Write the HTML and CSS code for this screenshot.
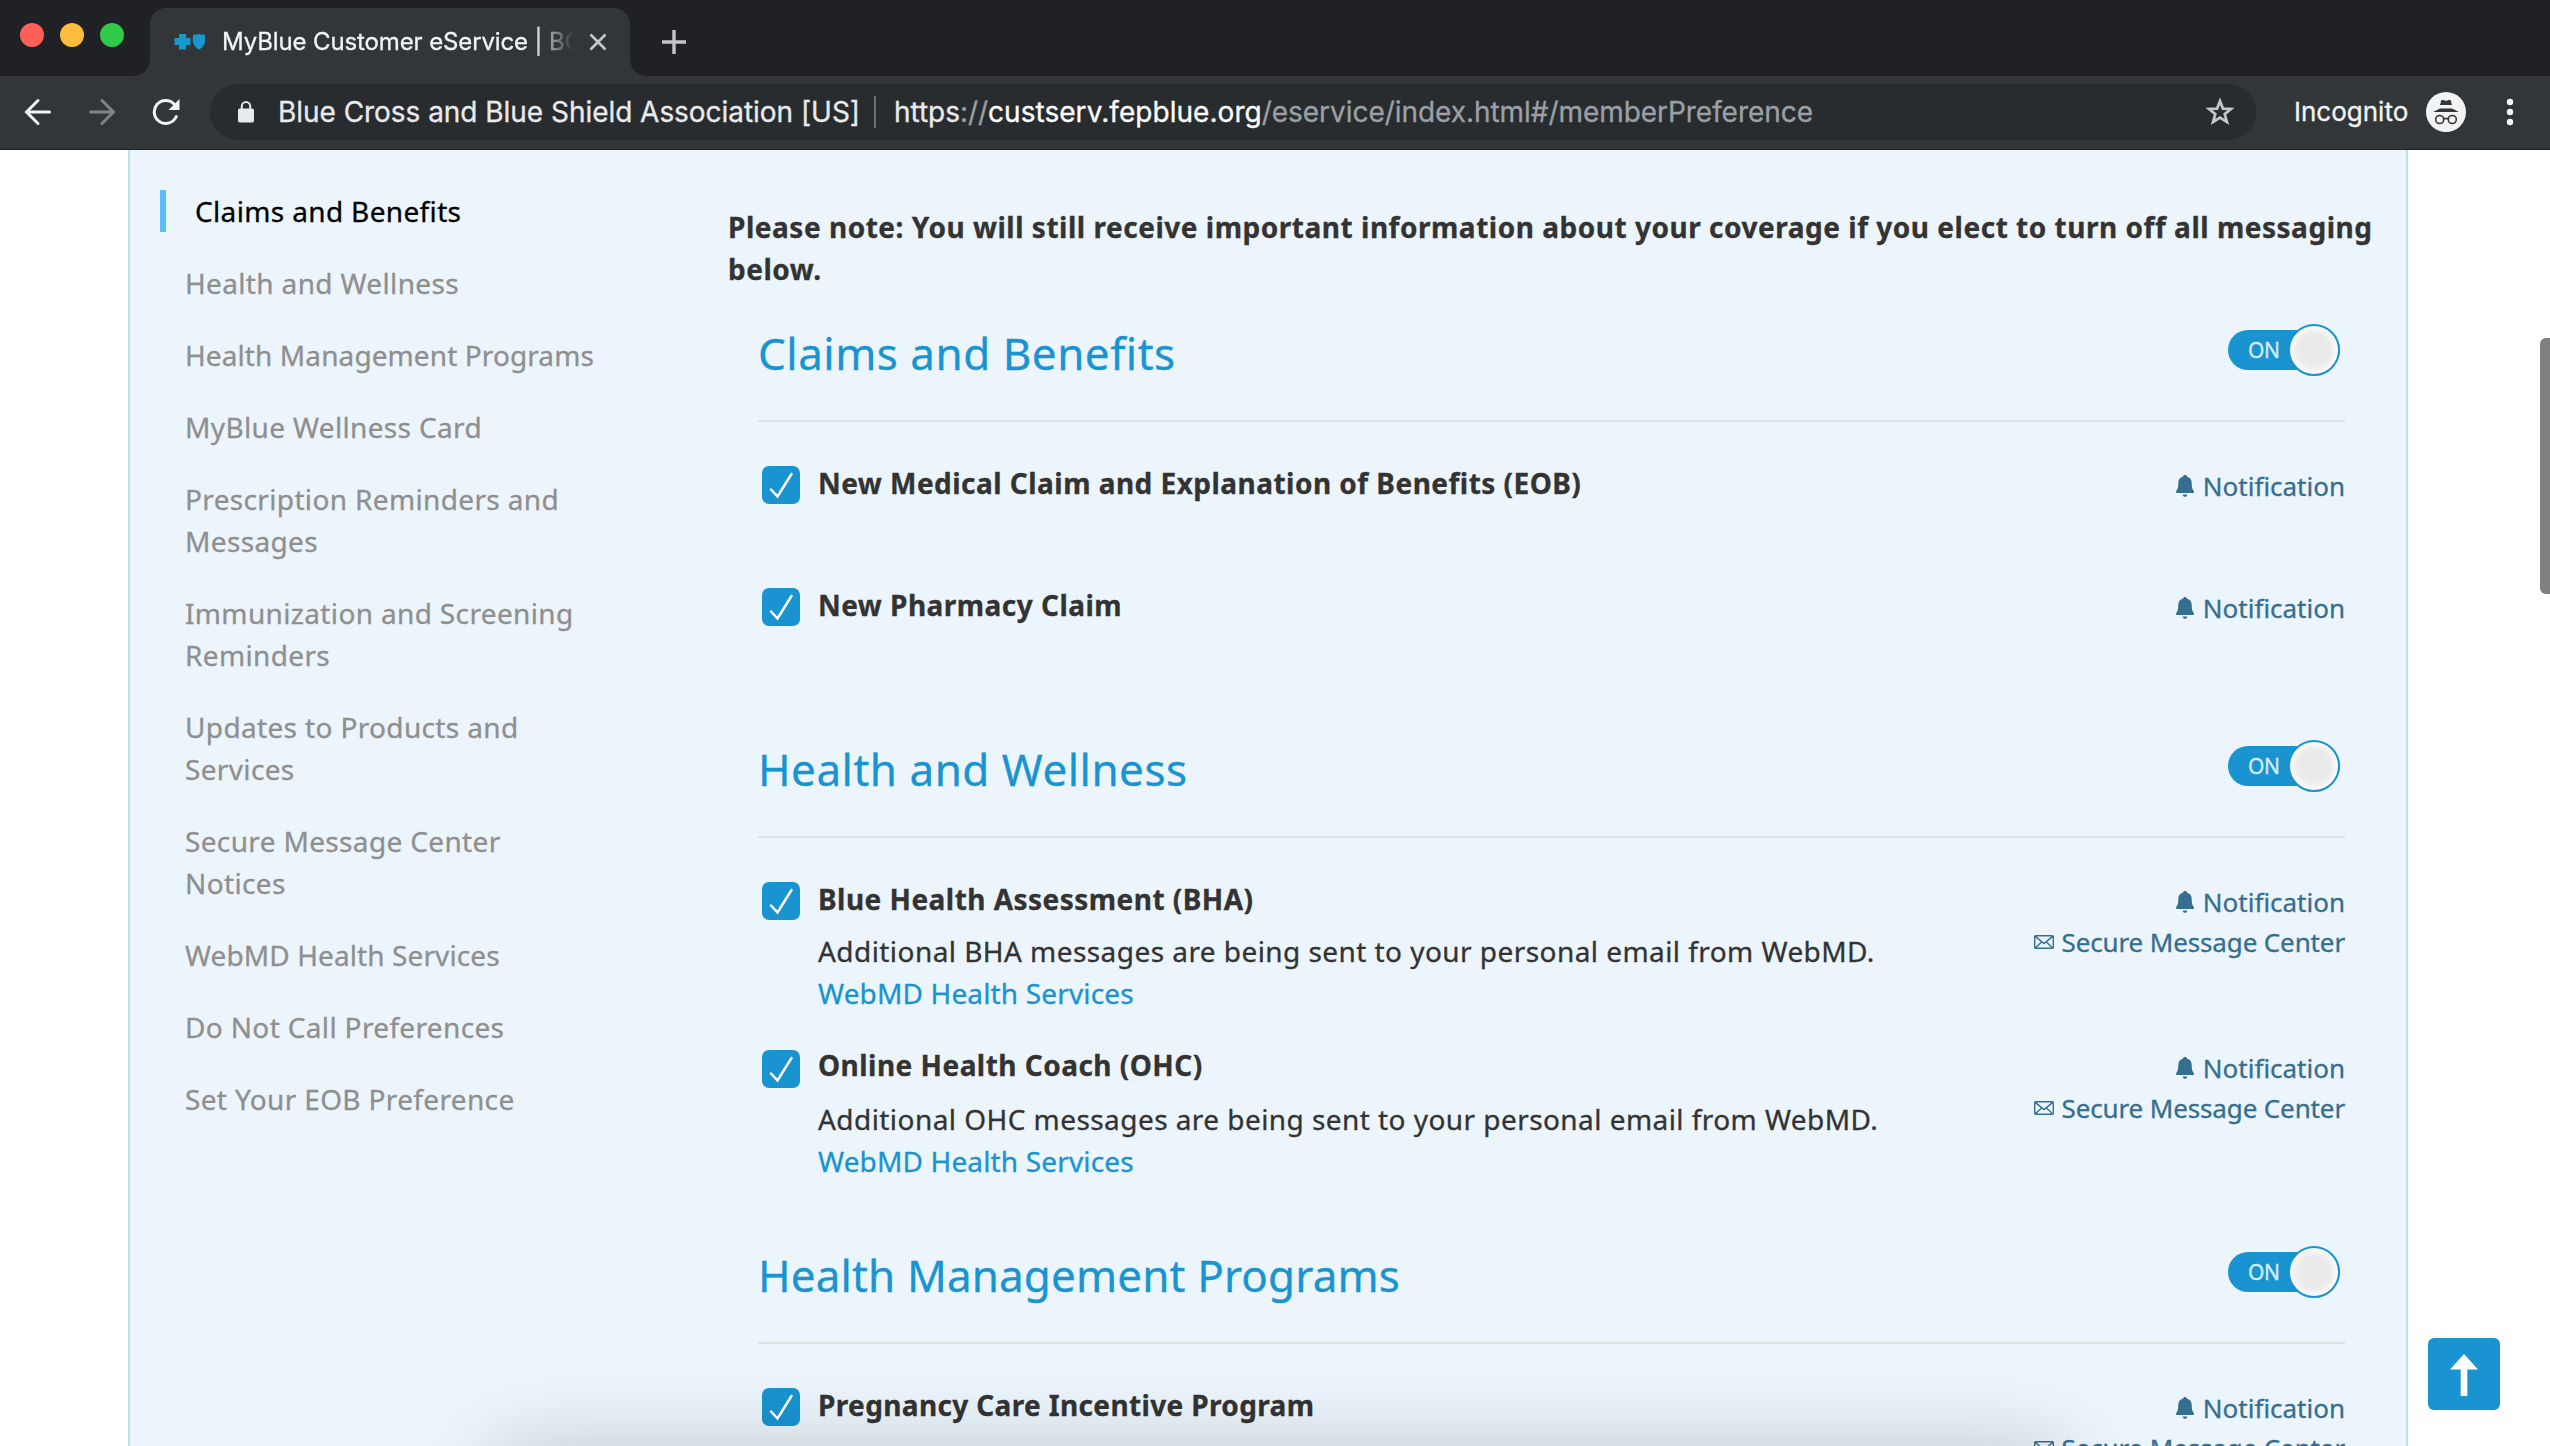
FILE: index.html
```html
<!DOCTYPE html>
<html lang="en">
<head>
<meta charset="utf-8">
<title>MyBlue Customer eService</title>
<link rel="stylesheet" href="styles.css">
</head>
<body>
<svg class="defs" aria-hidden="true">
  <symbol id="check" viewBox="0 0 38 38"><path d="M9 23.5l6.5 7L29.5 8" fill="none" stroke="#fff" stroke-width="2.5" stroke-linecap="round" stroke-linejoin="miter"/></symbol>
  <symbol id="bell" viewBox="0 0 18 22"><path d="M9 0c1.1 0 1.9.7 1.9 1.6 3.200.8 4.700 3.200 4.800 6.300.1 4 .4 6 1.800 7.600.6.8.7 2.500-.4 2.500H.9c-1.100 0-1-1.700-.4-2.500C1.900 13.900 2.200 11.900 2.300 7.900 2.400 4.800 3.900 2.400 7.100 1.600 7.100.7 7.900 0 9 0z"/><path d="M6.800 19.400h4.400c0 1.400-1 2.400-2.200 2.400s-2.200-1-2.200-2.400z"/></symbol>
  <symbol id="mail" viewBox="0 0 20 14"><path d="M1.600.8h16.800a.9.9 0 0 1 .9.9v10.600a.9.9 0 0 1-.9.9H1.600a.9.900 0 0 1-.9-.9V1.700a.9.900 0 0 1 .9-.9zM1.300 1.400l8.700 7.200 8.700-7.200M1.400 12.700l6.200-5.700M18.600 12.700l-6.200-5.700" fill="none" stroke="currentColor" stroke-width="1.400"/></symbol>
</svg>

<header class="browser">
  <div class="tabstrip">
    <div class="lights"><i class="red"></i><i class="yellow"></i><i class="green"></i></div>
    <div class="tab">
      <svg class="favicon" viewBox="0 0 32 18" width="32" height="18"><path fill="#1899cd" d="M5 1h7v4h4.500v7H12v4.500H5V12H.5V5H5z"/><path fill="#1899cd" d="M19.500 1.200c2 .9 3.600.4 5.500-.4 1.900.8 3.500 1.300 5.500.4 1.800 6.300.6 11.800-5.500 15.500-6.100-3.700-7.300-9.200-5.500-15.500z"/></svg>
      <span class="tab-title">MyBlue Customer eService | BC</span>
      <svg class="tab-close" viewBox="0 0 18 18" width="18" height="18"><path d="M1.500 1.500l15 15M16.500 1.500l-15 15" stroke="#c6c8ca" stroke-width="2.600"/></svg>
    </div>
    <svg class="newtab" viewBox="0 0 24 24" width="24" height="24"><path d="M12 0v24M0 12h24" stroke="#c3c5c8" stroke-width="3.400"/></svg>
  </div>
  <div class="toolbar">
    <svg class="nav" viewBox="0 0 28 28" width="28" height="28"><path d="M25.500 14H3M14 2.500L2.500 14 14 25.500" fill="none" stroke="#f1f3f4" stroke-width="3" stroke-linecap="round"/></svg>
    <svg class="nav" viewBox="0 0 28 28" width="28" height="28"><path d="M2.500 14H25M14 2.500L25.500 14 14 25.500" fill="none" stroke="#7f8385" stroke-width="3" stroke-linecap="round"/></svg>
    <svg class="nav" viewBox="0 0 28 28" width="28" height="28"><path d="M24.300 18.500A11.500 11.500 0 1 1 22.300 6.200" fill="none" stroke="#f1f3f4" stroke-width="3" stroke-linecap="round"/><path d="M27.500 1v11h-11z" fill="#f1f3f4"/></svg>
    <div class="omnibox">
      <svg class="lock" viewBox="0 0 16 22" width="16" height="22"><rect x="0" y="7.500" width="16" height="14" rx="1.800" fill="#e8eaed"/><path d="M3.800 8V5.200a4.200 4.200 0 0 1 8.400 0V8" fill="none" stroke="#e8eaed" stroke-width="2"/></svg>
      <span class="org">Blue Cross and Blue Shield Association [US]</span>
      <span class="sep"></span>
      <span class="url"><span class="scheme">https</span>://<b>custserv.fepblue.org</b>/eservice/index.html#/memberPreference</span>
      <svg class="star" viewBox="0 0 30 30" width="30" height="30"><path d="M15 4l2.900 7.600 8.100.4-6.300 5.100 2.200 7.900-6.900-4.500L8.100 25l2.200-7.900L4 12l8.100-.4z" fill="none" stroke="#c3c6c9" stroke-width="2.700"/></svg>
    </div>
    <span class="incognito">Incognito</span>
    <svg class="avatar" viewBox="0 0 40 40" width="40" height="40"><circle cx="20" cy="20" r="20" fill="#f1f3f4"/><path d="M14 13l1.400-5h2l2.600.9 2.600-.9h2L26 13zM7 20l7-3.500h12l7 3.500z" fill="#323639"/><circle cx="13.700" cy="27.500" r="4" fill="none" stroke="#323639" stroke-width="1.600"/><circle cx="26.300" cy="27.500" r="4" fill="none" stroke="#323639" stroke-width="1.600"/><path d="M17.500 27.200q2.500-1.600 5 0" fill="none" stroke="#323639" stroke-width="1.600"/></svg>
    <svg class="dots" viewBox="0 0 8 28" width="8" height="28" fill="#f1f3f4"><circle cx="4" cy="4" r="3.200"/><circle cx="4" cy="14" r="3.200"/><circle cx="4" cy="24" r="3.200"/></svg>
  </div>
</header>

<div class="page">
  <nav class="sidebar">
    <a class="active">Claims and Benefits</a>
    <a>Health and Wellness</a>
    <a class="long">Health Management Programs</a>
    <a>MyBlue Wellness Card</a>
    <a>Prescription Reminders and<br>Messages</a>
    <a>Immunization and Screening<br>Reminders</a>
    <a>Updates to Products and<br>Services</a>
    <a>Secure Message Center<br>Notices</a>
    <a class="long">WebMD Health Services</a>
    <a>Do Not Call Preferences</a>
    <a>Set Your EOB Preference</a>
  </nav>
  <main class="content">
    <p class="note">Please note: You will still receive important information about your coverage if you elect to turn off all messaging<br>below.</p>

    <section class="group">
      <div class="group-head"><h2>Claims and Benefits</h2><div class="toggle"><span>ON</span><i></i></div></div>
      <div class="row short">
        <svg class="box"><use href="#check"/></svg>
        <div class="text"><h3>New Medical Claim and Explanation of Benefits (EOB)</h3></div>
        <div class="channels"><span><svg class="bell"><use href="#bell"/></svg>Notification</span></div>
      </div>
      <div class="row short">
        <svg class="box"><use href="#check"/></svg>
        <div class="text"><h3>New Pharmacy Claim</h3></div>
        <div class="channels"><span><svg class="bell"><use href="#bell"/></svg>Notification</span></div>
      </div>
    </section>

    <section class="group">
      <div class="group-head"><h2>Health and Wellness</h2><div class="toggle"><span>ON</span><i></i></div></div>
      <div class="row">
        <svg class="box"><use href="#check"/></svg>
        <div class="text"><h3>Blue Health Assessment (BHA)</h3><p>Additional BHA messages are being sent to your personal email from WebMD.</p><a>WebMD Health Services</a></div>
        <div class="channels"><span><svg class="bell"><use href="#bell"/></svg>Notification</span><span class="secure"><svg class="mail"><use href="#mail"/></svg>Secure Message Center</span></div>
      </div>
      <div class="row loose">
        <svg class="box"><use href="#check"/></svg>
        <div class="text"><h3>Online Health Coach (OHC)</h3><p>Additional OHC messages are being sent to your personal email from WebMD.</p><a>WebMD Health Services</a></div>
        <div class="channels"><span><svg class="bell"><use href="#bell"/></svg>Notification</span><span class="secure"><svg class="mail"><use href="#mail"/></svg>Secure Message Center</span></div>
      </div>
    </section>

    <section class="group">
      <div class="group-head"><h2 class="long">Health Management Programs</h2><div class="toggle"><span>ON</span><i></i></div></div>
      <div class="row">
        <svg class="box"><use href="#check"/></svg>
        <div class="text"><h3 class="snug">Pregnancy Care Incentive Program</h3></div>
        <div class="channels"><span><svg class="bell"><use href="#bell"/></svg>Notification</span><span class="secure"><svg class="mail"><use href="#mail"/></svg>Secure Message Center</span></div>
      </div>
    </section>
  </main>
</div>

<div class="overlay"><div class="shade"></div></div>
<div class="scrollbar"></div>
<div class="to-top"><svg viewBox="0 0 72 72" width="72" height="72"><path d="M36 16l14 15.500H39.300V58h-6.600V31.500H22z" fill="#fff"/></svg></div>
</body>
</html>
```
FILE: styles.css
```css
* { box-sizing: border-box; margin: 0; padding: 0; }
html, body { height: 1446px; overflow: hidden; }
body {
  position: relative;
  display: flex;
  flex-direction: column;
  background: #fff;
  font-family: "Noto Sans", "Open Sans", sans-serif;
  font-size: 28px;
  line-height: 42px;
  color: #333;
  -webkit-text-stroke: 0.3px;
}
svg { display: block; flex: none; }
.defs { position: absolute; width: 0; height: 0; }

/* browser chrome */
.browser { flex: none; height: 150px; font-family: Inter, Roboto, sans-serif; white-space: nowrap; }
.tabstrip { display: flex; height: 76px; background: #202124; }
.lights { display: flex; gap: 16px; padding: 23px 0 0 20px; width: 150px; flex: none; }
.lights i { width: 24px; height: 24px; border-radius: 50%; }
.red { background: #ff5f58; }
.yellow { background: #ffbd3e; }
.green { background: #30c94a; }
.tab {
  position: relative;
  display: flex;
  align-items: center;
  width: 480px;
  height: 68px;
  margin-top: 8px;
  padding-left: 24px;
  background: #323639;
  border-radius: 16px 16px 0 0;
}
.tab::before, .tab::after { content: ""; position: absolute; bottom: 0; width: 16px; height: 16px; }
.tab::before { left: -16px; background: radial-gradient(circle at 0 0, #202124 15.5px, #323639 16px); }
.tab::after { right: -16px; background: radial-gradient(circle at 100% 0, #202124 15.5px, #323639 16px); }
.tab-title {
  width: 350px;
  margin-left: 16px;
  overflow: hidden;
  font-size: 24px;
  line-height: 34px;
  letter-spacing: -0.12px;
  color: #f1f3f4;
  -webkit-mask-image: linear-gradient(90deg, #000 310px, transparent 352px);
  mask-image: linear-gradient(90deg, #000 310px, transparent 352px);
}
.tab-close { margin-left: 17px; }
.newtab { margin: 30px 0 0 32px; }
.toolbar { display: flex; align-items: center; height: 74px; padding: 0 36px 2px 24px; background: #323639; border-bottom: 1px solid #202124; }
.nav { margin-right: 36px; }
.omnibox {
  display: flex;
  align-items: center;
  width: 2046px;
  height: 56px;
  margin-left: -6px;
  padding-left: 28px;
  border-radius: 28px;
  background: #282c2f;
}
.org { flex: none; margin-left: 24px; width: 596px; letter-spacing: -0.04px; color: #e8eaed; }
.sep { width: 2px; height: 32px; margin-right: 18px; background: #6b6f72; }
.url { letter-spacing: -0.05px; color: #9aa0a6; }
.scheme { color: #e8eaed; }
.url b { font-weight: 400; letter-spacing: 0.05px; color: #fff; }
.star { margin: 0 21px 0 auto; }
.incognito { margin-left: 38px; width: 132px; font-size: 26px; letter-spacing: 0; color: #f1f3f4; }
.dots { margin-left: auto; }

/* page */
.page {
  flex: none;
  display: flex;
  width: 2280px;
  height: 1296px;
  margin-left: 128px;
  overflow: hidden;
  background: #ecf5fb;
  border: 2px solid #bfdff0;
  border-width: 0 2px;
}
.sidebar { display: flex; flex-direction: column; gap: 30px; width: 598px; flex: none; padding: 40px 0 0 55px; letter-spacing: 0.35px; color: #8f8f8f; }
.sidebar .active { margin-left: -25px; padding-left: 29px; border-left: 6px solid #5bbdfb; color: #000; }
.sidebar .long { letter-spacing: 0.1px; }
.content { width: 1678px; padding-top: 56px; white-space: nowrap; }
.note { font-weight: 700; letter-spacing: 0.52px; }
.group { width: 1587px; margin: 33px 0 0 30px; }
.group + .group { margin-top: 34px; }
.group-head { display: flex; justify-content: space-between; height: 99px; margin-bottom: 39px; border-bottom: 2px solid #e0e0e0; }
h2 { font-weight: 400; font-size: 44px; line-height: 60px; letter-spacing: 0.5px; color: #1994d1; }
h2.long { letter-spacing: 0.13px; }
.toggle { position: relative; width: 112px; height: 40px; margin: 7px 5px 0 0; padding-left: 20px; border-radius: 20px; background: #1994d1; font-size: 21px; line-height: 40px; color: #d6edf9; }
.toggle span { letter-spacing: -0.5px; }
.toggle i { position: absolute; right: 0; top: -6px; width: 52px; height: 52px; border: 2px solid #1994d1; border-radius: 50%; background: #eaeaea; box-shadow: inset 0 0 7px 3px #fff; }
.row { display: flex; padding: 0 0 29px 4px; }
.row.short { height: 122px; }
.box { width: 38px; height: 38px; margin: 5px 18px 0 0; border-radius: 7px; background: #1994d1; }
.loose .box { margin-top: 7px; }
.text { flex: 1; }
h3 { padding-top: 1px; font-size: 28px; font-weight: 700; letter-spacing: 0.47px; }
h3.snug { letter-spacing: 0.36px; }
.text p { margin-top: 10px; letter-spacing: 0.44px; }
.loose p { margin-top: 12px; }
.text a { display: block; letter-spacing: 0.15px; color: #1994d1; }
.channels { display: flex; flex-direction: column; align-items: flex-end; padding-top: 5px; font-size: 26px; line-height: 40px; color: #356e8f; }
.channels span { display: flex; align-items: center; height: 40px; }
.channels .secure { letter-spacing: -0.13px; }
.bell { width: 18px; height: 22px; margin-right: 9px; fill: currentColor; }
.mail { width: 20px; height: 14px; margin-right: 7px; }

/* overlays */
.overlay { position: absolute; inset: 0; overflow: hidden; pointer-events: none; }
.shade { position: absolute; left: 505px; top: 1466px; width: 1550px; height: 200px; box-shadow: 0 0 90px 10px rgba(0, 0, 0, 0.22); }
.scrollbar { position: absolute; left: 2540px; top: 338px; width: 10px; height: 256px; border-radius: 6px 0 0 6px; background: #7f7f7f; }
.to-top { position: absolute; left: 2428px; top: 1338px; width: 72px; height: 72px; border-radius: 6px; background: #1994d1; }
```
